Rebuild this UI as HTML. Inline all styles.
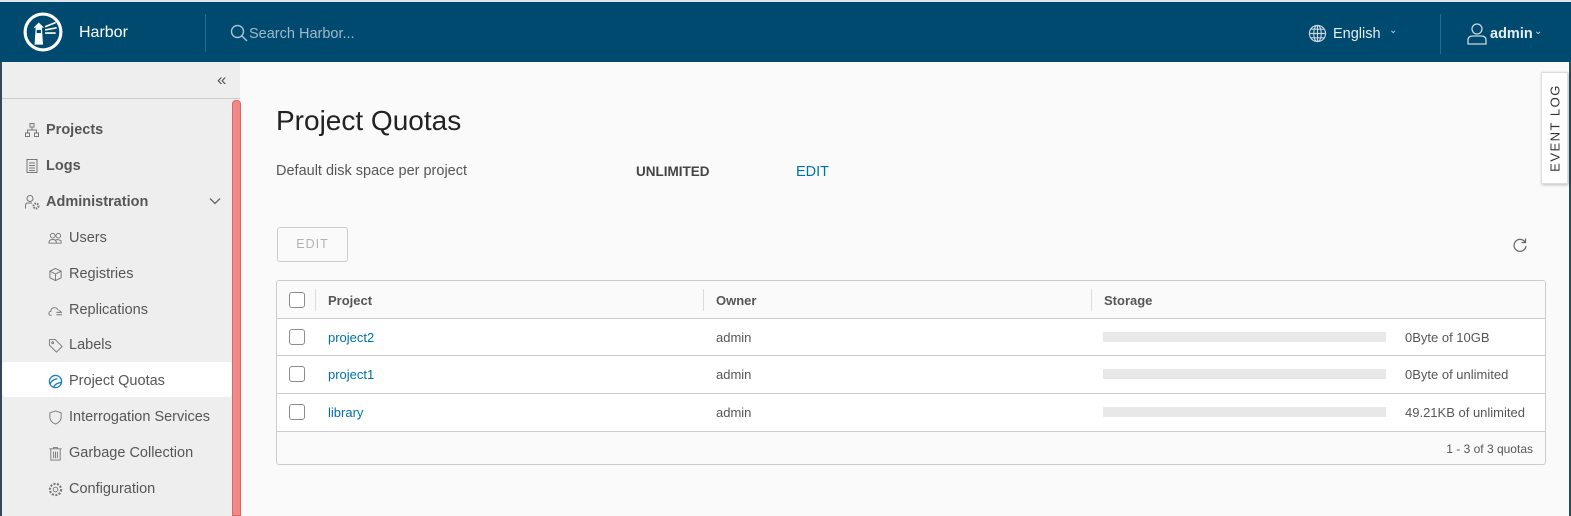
<!DOCTYPE html>
<html><head><meta charset="utf-8"><style>
*{box-sizing:border-box;margin:0;padding:0}
body{width:1571px;height:516px;overflow:hidden;background:#fafafa;font-family:"Liberation Sans",sans-serif;position:relative;color:#565656}
.hdr{position:absolute;left:0;top:0;width:1571px;height:62px;background:#004a70;border-top:2px solid #dfe6ea}
.abs{position:absolute}
.side{position:absolute;left:0;top:62px;width:240px;height:454px;background:#eee;border-left:2px solid #2e4a5c}
.nav{position:absolute;font-size:14.5px;color:#565656;display:flex;align-items:center}
.nav svg{margin-right:6px}
.t{font-size:13px}
.cb{position:absolute;left:12px;width:16px;height:16px;border:1px solid #8c8c8c;border-radius:3px;background:#fff}
.row{position:absolute;left:0;width:1268px;background:#fff;border-top:1px solid #ccc;height:38px}
.row .c{position:absolute;top:11px;font-size:13px}
.bar{position:absolute;left:826px;top:13px;width:283px;height:10px;background:#e8e8e8}
</style></head><body>
<div class="hdr">
  <svg class="abs" style="left:23px;top:10px" width="40" height="40" viewBox="0 0 38 38"><circle cx="19" cy="19" r="17" fill="none" stroke="#fff" stroke-width="3"/><path d="M11 31 L12 15 L18 15 L19 31 Z M10 15 L20 15 L15 10 Z" fill="#fff"/><path d="M21 14 L31 10 M21 17 L32 15 M21 20 L31 20" stroke="#fff" stroke-width="1.6"/><rect x="13" y="17" width="4" height="3" fill="#004a70"/></svg>
  <div class="abs" style="left:79px;top:22px;color:#fff;font-size:16px">Harbor</div>
  <div class="abs" style="left:205px;top:12px;width:1px;height:38px;background:#2a6a8c"></div>
  <svg class="abs" style="left:230px;top:22px" width="18" height="18" viewBox="0 0 18 18"><circle cx="7.5" cy="7.5" r="6" fill="none" stroke="#a9c3d2" stroke-width="1.4"/><path d="M12 12 L17 17" stroke="#a9c3d2" stroke-width="1.4"/></svg>
  <div class="abs" style="left:249px;top:24px;color:#9fb9c9;font-size:14.5px">Search Harbor...</div>
  <svg class="abs" style="left:1308px;top:22px" width="19" height="19" viewBox="0 0 20 20" fill="none" stroke="#c8d6df" stroke-width="1.2"><circle cx="10" cy="10" r="8.5"/><ellipse cx="10" cy="10" rx="4" ry="8.5"/><path d="M1.5 10H18.5M3 5.5H17M3 14.5H17M10 1.5V18.5"/></svg>
  <div class="abs" style="left:1333px;top:24px;color:#e5edf2;font-size:14.5px">English</div>
  <div class="abs" style="left:1389px;top:23px;color:#c8d6df;font-size:10px">&#8964;</div>
  <div class="abs" style="left:1440px;top:12px;width:1px;height:40px;background:#2a6a8c"></div>
  <svg class="abs" style="left:1467px;top:21px" width="20" height="22" viewBox="0 0 20 22" fill="none" stroke="#c8d6df" stroke-width="1.3"><circle cx="10" cy="6" r="5"/><path d="M1 21 V17 Q1 13 6 13 H14 Q19 13 19 17 V21 Z"/></svg>
  <div class="abs" style="left:1490px;top:24px;color:#e5edf2;font-size:14.5px;font-weight:bold">admin</div>
  <div class="abs" style="left:1534px;top:24px;color:#c8d6df;font-size:10px">&#8964;</div>
</div>
<div class="side">
  <div class="abs" style="left:0;top:36px;width:238px;height:1px;background:#ccc"></div>
  <div class="abs" style="left:215px;top:8px;font-size:17px;color:#565656">&laquo;</div>
  <div class="abs" style="left:230px;top:38px;width:9px;height:416px;background:#f08a88;border-radius:4px 4px 0 0;border:1px solid #d66"></div>
  <div class="abs" style="left:0;top:300px;width:230px;height:35px;background:#fff;border-radius:3px"></div>
  <div class="nav" style="left:22px;top:60px;font-weight:bold"><svg width="16" height="16" viewBox="0 0 16 16" fill="none" stroke="#777"><rect x="6" y="1.5" width="4" height="3.5"/><rect x="1.5" y="11" width="4" height="3.5"/><rect x="10.5" y="11" width="4" height="3.5"/><path d="M8 5V8M3.5 11V8H12.5V11"/></svg>Projects</div>
  <div class="nav" style="left:22px;top:96px;font-weight:bold"><svg width="16" height="16" viewBox="0 0 16 16" fill="none" stroke="#777"><rect x="3" y="1.5" width="10" height="13"/><path d="M5 5H11M5 7.5H11M5 10H11M5 12.5H11"/></svg>Logs</div>
  <div class="nav" style="left:22px;top:132px;font-weight:bold"><svg width="16" height="16" viewBox="0 0 16 16" fill="none" stroke="#777"><circle cx="6" cy="4.5" r="3"/><path d="M1.5 14.5V11Q1.5 9 4 9H8"/><circle cx="12" cy="12" r="2.5" stroke-width="2" stroke-dasharray="1.5 1"/></svg>Administration</div>
  <svg class="abs" style="left:207px;top:135px" width="12" height="8" viewBox="0 0 12 8" fill="none" stroke="#666" stroke-width="1.3"><path d="M1 1.5L6 6.5L11 1.5"/></svg>
  <div class="nav" style="left:46px;top:168px"><svg width="15" height="15" viewBox="0 0 16 16" fill="none" stroke="#777"><circle cx="5" cy="5" r="2.5"/><circle cx="11" cy="5" r="2.5"/><path d="M1 13Q1 9 5 9Q9 9 9 13ZM8 9.5Q11 8.5 14 10.5V13H9.5"/></svg>Users</div>
  <div class="nav" style="left:46px;top:204px"><svg width="15" height="15" viewBox="0 0 16 16" fill="none" stroke="#777"><path d="M8 1.5L14 4.5V11.5L8 14.5L2 11.5V4.5ZM2 4.5L8 7.5L14 4.5M8 7.5V14.5"/></svg>Registries</div>
  <div class="nav" style="left:46px;top:240px"><svg width="15" height="15" viewBox="0 0 16 16" fill="none" stroke="#777"><path d="M4 13H2.5Q1 13 1 11Q1 9 3 9Q3 5 7 5Q10 5 11 8M9 10H15M12 8L14.5 10M9 12.5H15"/></svg>Replications</div>
  <div class="nav" style="left:46px;top:275px"><svg width="15" height="15" viewBox="0 0 16 16" fill="none" stroke="#777"><path d="M1.5 2V7.5L9 15L15 9L7.5 1.5H2Z"/><circle cx="5" cy="5" r="1"/></svg>Labels</div>
  <div class="nav" style="left:46px;top:311px"><svg width="15" height="15" viewBox="0 0 16 16" fill="none" stroke="#1a7fc1" stroke-width="1.4"><circle cx="8" cy="8" r="6.5"/><path d="M2 11Q4 6 10 5M6 14.5Q7 10 14 9"/></svg>Project Quotas</div>
  <div class="nav" style="left:46px;top:347px"><svg width="15" height="15" viewBox="0 0 16 16" fill="none" stroke="#777"><path d="M8 1L14 3V8Q14 12.5 8 15Q2 12.5 2 8V3Z"/></svg>Interrogation Services</div>
  <div class="nav" style="left:46px;top:383px"><svg width="15" height="15" viewBox="0 0 16 16" fill="none" stroke="#777"><path d="M1.5 3H14.5M6 3V1.5H10V3M3 3V15H13V3M6 6V13M8 6V13M10 6V13"/></svg>Garbage Collection</div>
  <div class="nav" style="left:46px;top:419px"><svg width="15" height="15" viewBox="0 0 16 16" fill="none" stroke="#777"><circle cx="8" cy="8" r="2.5"/><circle cx="8" cy="8" r="6" stroke-width="2.2" stroke-dasharray="2.2 1.5"/></svg>Configuration</div>
</div>
<div class="abs" style="left:1569px;top:62px;width:2px;height:454px;background:#2e4a5c"></div>
<div class="abs" style="left:276px;top:105px;font-size:28px;color:#222">Project Quotas</div>
<div class="abs" style="left:276px;top:163px;font-size:14.5px;color:#565656">Default disk space per project</div>
<div class="abs" style="left:636px;top:164px;font-size:13.5px;font-weight:bold;color:#444">UNLIMITED</div>
<div class="abs" style="left:796px;top:164px;font-size:14.5px;color:#0072a3">EDIT</div>
<div class="abs" style="left:277px;top:227px;width:71px;height:35px;border:1px solid #ccc;border-radius:3px;color:#b3b3b3;font-size:12.5px;letter-spacing:1px;text-align:center;line-height:33px">EDIT</div>
<svg class="abs" style="left:1512px;top:237px" width="16" height="16" viewBox="0 0 16 16" fill="none" stroke="#666" stroke-width="1.2"><path d="M13 5A6 6 0 1 0 14 9"/><path d="M13.5 1.5V5.5H9.5"/></svg>
<div class="abs" style="left:1541px;top:72px;width:27px;height:112px;background:#fff;box-shadow:1px 1px 3px rgba(0,0,0,.25);border:1px solid #ddd"></div>
<div class="abs" style="left:1555px;top:128px;transform:translate(-50%,-50%) rotate(-90deg);font-size:13px;letter-spacing:1.5px;color:#333;white-space:nowrap">EVENT LOG</div>
<div class="abs" style="left:276px;top:280px;width:1270px;height:185px;border:1px solid #ccc;border-radius:3px;background:#fafafa;overflow:hidden">
  <div class="abs" style="left:0;top:0;width:1268px;height:37px;background:#fafafa">
    <div class="cb" style="top:11px"></div>
    <div class="abs" style="left:38px;top:8px;width:1px;height:22px;background:#ddd"></div>
    <div class="abs" style="left:426px;top:8px;width:1px;height:22px;background:#ddd"></div>
    <div class="abs" style="left:814px;top:8px;width:1px;height:22px;background:#ddd"></div>
    <div class="abs t" style="left:51px;top:12px;font-weight:bold;color:#565656">Project</div>
    <div class="abs t" style="left:439px;top:12px;font-weight:bold;color:#565656">Owner</div>
    <div class="abs t" style="left:827px;top:12px;font-weight:bold;color:#565656">Storage</div>
  </div>
  <div class="row" style="top:37px"><div class="cb" style="top:10px"></div><div class="c" style="left:51px;color:#0072a3">project2</div><div class="c" style="left:439px">admin</div><div class="bar"></div><div class="c" style="left:1128px">0Byte of 10GB</div></div>
  <div class="row" style="top:74px"><div class="cb" style="top:10px"></div><div class="c" style="left:51px;color:#0072a3">project1</div><div class="c" style="left:439px">admin</div><div class="bar"></div><div class="c" style="left:1128px">0Byte of unlimited</div></div>
  <div class="row" style="top:112px"><div class="cb" style="top:10px"></div><div class="c" style="left:51px;color:#0072a3">library</div><div class="c" style="left:439px">admin</div><div class="bar"></div><div class="c" style="left:1128px">49.21KB of unlimited</div></div>
  <div class="abs" style="left:0;top:150px;width:1268px;height:1px;background:#ccc"></div>
  <div class="abs" style="right:12px;top:161px;font-size:12px;color:#565656">1 - 3 of 3 quotas</div>
</div>
</body></html>
